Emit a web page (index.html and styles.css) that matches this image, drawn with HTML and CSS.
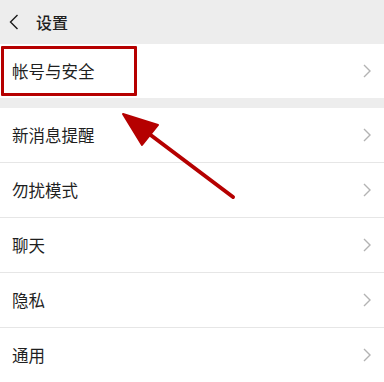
FILE: index.html
```html
<!DOCTYPE html>
<html lang="zh-CN">
<head>
<meta charset="utf-8">
<link rel="stylesheet" href="styles.css">
</head>
<body>
<div class="page">
  <header class="topbar">
    <svg class="back" width="10" height="16" viewBox="0 0 10 16"><polyline points="8.5,1 1.5,8 8.5,15" fill="none" stroke="#1a1a1a" stroke-width="1.4"/></svg>
    <span class="title">设置</span>
  </header>
  <section class="group">
    <div class="row"><span class="label">帐号与安全</span><svg class="chev" width="8" height="14" viewBox="0 0 8 14"><polyline points="1,1 7,7 1,13" fill="none" stroke="#b3b3b3" stroke-width="1.4"/></svg></div>
  </section>
  <section class="group second">
    <div class="row"><span class="label">新消息提醒</span><svg class="chev" width="8" height="14" viewBox="0 0 8 14"><polyline points="1,1 7,7 1,13" fill="none" stroke="#b3b3b3" stroke-width="1.4"/></svg></div>
    <div class="row"><span class="label">勿扰模式</span><svg class="chev" width="8" height="14" viewBox="0 0 8 14"><polyline points="1,1 7,7 1,13" fill="none" stroke="#b3b3b3" stroke-width="1.4"/></svg></div>
    <div class="row"><span class="label">聊天</span><svg class="chev" width="8" height="14" viewBox="0 0 8 14"><polyline points="1,1 7,7 1,13" fill="none" stroke="#b3b3b3" stroke-width="1.4"/></svg></div>
    <div class="row"><span class="label">隐私</span><svg class="chev" width="8" height="14" viewBox="0 0 8 14"><polyline points="1,1 7,7 1,13" fill="none" stroke="#b3b3b3" stroke-width="1.4"/></svg></div>
    <div class="row"><span class="label">通用</span><svg class="chev" width="8" height="14" viewBox="0 0 8 14"><polyline points="1,1 7,7 1,13" fill="none" stroke="#b3b3b3" stroke-width="1.4"/></svg></div>
  </section>
  <div class="highlight"></div>
  <svg class="arrow" width="384" height="382" viewBox="0 0 384 382">
    <line x1="233" y1="197" x2="140" y2="127" stroke="#b50000" stroke-width="4" stroke-linecap="round"/>
    <polygon points="123,114 158,125 142,145" fill="#b50000" stroke="#b50000" stroke-width="2" stroke-linejoin="round"/>
  </svg>
</div>
</body>
</html>
```
FILE: styles.css
```css
html, body {
  margin: 0;
  padding: 0;
  background: #ededed;
  font-family: "Noto Sans CJK SC", "Noto Sans", sans-serif;
  color: #1f1f1f;
}
.page {
  position: relative;
  width: 384px;
  height: 382px;
  overflow: hidden;
}
.topbar {
  height: 44px;
  display: flex;
  align-items: center;
  padding-left: 9px;
  gap: 17px;
  box-sizing: border-box;
}
.back { display: block; }
.title {
  font-size: 16px;
  font-weight: 500;
  line-height: 1;
}
.group {
  background: #fff;
}
.second {
  margin-top: 10px;
}
.row {
  height: 54px;
  display: flex;
  align-items: center;
  justify-content: space-between;
  padding: 0 13px 0 12px;
  position: relative;
}
.second .row {
  border-bottom: 1px solid #e6e6e6;
}
.second .row:last-child { border-bottom: none; }
.label {
  font-size: 16.5px;
  line-height: 1;
}
.chev { display: block; }
.highlight {
  position: absolute;
  left: 1px;
  top: 46px;
  width: 136px;
  height: 50px;
  border: 3px solid #b60000;
  box-sizing: border-box;
  border-radius: 1px;
}
.arrow {
  position: absolute;
  left: 0;
  top: 0;
}
```
